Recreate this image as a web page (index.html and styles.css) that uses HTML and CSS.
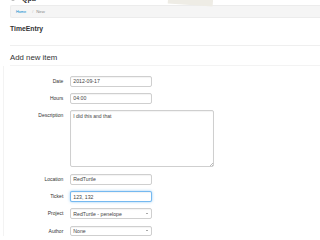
FILE: index.html
```html
<!DOCTYPE html>
<html lang="en">
  <head>
    <meta charset="UTF-8" />
    <meta name="viewport" content="width=device-width, initial-scale=1.0" />
    <title>TimeEntry - Add new item</title>
    <link rel="stylesheet" href="styles.css">
  </head>
  <body>
    <div class="paper"></div>
    <div class="topbar">
      <svg class="logo" width="6" height="6" viewBox="0 0 6 6">
        <circle cx="3" cy="3" r="2.3" fill="none" stroke="#9a9a9a" stroke-width="1" />
      </svg>
      <span class="brand">Qpa</span>
    </div>
    <div class="page">
      <ul class="breadcrumb">
        <li><a href="#">Home</a><span class="divider">/</span></li>
        <li class="active">New</li>
      </ul>
      <h1 class="title">TimeEntry</h1>
      <hr class="rule" />
      <form class="entry-form">
        <div class="legend">Add new item</div>
        <div class="rows">
          <div class="form-group">
            <label for="date">Date</label>
            <input type="text" id="date" value="2012-09-17" />
          </div>
          <div class="form-group">
            <label for="hours">Hours</label>
            <input type="text" id="hours" value="04:00" />
          </div>
          <div class="form-group top">
            <label for="description">Description</label>
            <span class="area">
              <textarea id="description">I did this and that</textarea>
            </span>
          </div>
          <div class="form-group">
            <label for="location">Location</label>
            <input type="text" id="location" value="RedTurtle" />
          </div>
          <div class="form-group">
            <label for="ticket">Ticket</label>
            <input type="text" id="ticket" class="focused" value="123, 132" />
          </div>
          <div class="form-group">
            <label for="project">Project</label>
            <span class="select">
              <select id="project">
                <option>RedTurtle - penelope</option>
              </select>
            </span>
          </div>
          <div class="form-group">
            <label for="author">Author</label>
            <span class="select">
              <select id="author">
                <option>None</option>
              </select>
            </span>
          </div>
        </div>
      </form>
    </div>
  </body>
</html>
```

FILE: styles.css
```css
body {
  margin: 0;
  padding: 0;
  background: #ffffff;
  font-family: "Liberation Sans", Arial, sans-serif;
  color: #333;
  overflow: hidden;
}

.paper {
  position: absolute;
  left: 168px;
  top: -5px;
  width: 45px;
  height: 10px;
  background: #eeece5;
  transform: rotate(4deg);
}

.topbar {
  display: flex;
  align-items: center;
  height: 12px;
  margin-top: -8px;
  margin-bottom: 1px;
  padding-left: 10px;
  position: relative;
}

.brand {
  margin-left: 6px;
  font-size: 7px;
  font-weight: bold;
  color: #333;
}

.page {
  padding-left: 10px;
}

.breadcrumb {
  list-style: none;
  display: flex;
  align-items: center;
  box-sizing: border-box;
  height: 13px;
  margin: 1px 0 0;
  padding: 0 0 0 5px;
  background: #f5f5f5;
  border: 1px solid #ececec;
  border-right: none;
  border-radius: 2px 0 0 2px;
  font-size: 3.8px;
}

.breadcrumb a {
  color: #0088cc;
  text-decoration: none;
}

.breadcrumb .divider {
  color: #bbb;
  padding: 0 3px 0 6px;
}

.breadcrumb .active {
  color: #888;
  font-size: 4.3px;
}

.title {
  margin: 7px 0 0;
  font-size: 6.8px;
  line-height: 8px;
  font-weight: bold;
  color: #333;
}

.rule {
  margin: 12px 0 0;
  border: none;
  border-top: 1px solid #efefef;
  height: 0;
}

.legend {
  margin-top: 7px;
  padding-bottom: 2px;
  font-size: 7.8px;
  line-height: 10px;
  color: #333;
  border-bottom: 1px solid #f3f3f3;
}

.entry-form {
  margin: 0;
}

.rows {
  margin-left: -7px;
  padding: 10px 0 0 7px;
  border-left: 1px solid #f3f3f3;
}

.form-group {
  display: flex;
  align-items: center;
  margin-bottom: 6.7px;
}

.form-group.top {
  align-items: flex-start;
}

.form-group label {
  width: 52.3px;
  margin-right: 7px;
  text-align: right;
  font-size: 5px;
  line-height: 10.5px;
  color: #333;
}

.form-group input,
.form-group textarea,
.form-group select {
  display: block;
  box-sizing: border-box;
  width: 82px;
  height: 10.5px;
  margin: 0;
  padding: 0 0 0 2px;
  border: 1px solid #cfcfcf;
  border-radius: 2px;
  background: #fff;
  box-shadow: inset 0 1px 1px rgba(0, 0, 0, 0.05);
  font-family: "Liberation Sans", Arial, sans-serif;
  font-size: 5.2px;
  line-height: 8px;
  color: #444;
  outline: none;
}

.area {
  position: relative;
  display: flex;
}

.form-group textarea {
  width: 144px;
  height: 57px;
  padding-top: 1.5px;
  line-height: 6px;
  font-size: 5px;
  resize: none;
}

.area::after {
  content: "";
  position: absolute;
  right: 1.5px;
  bottom: 1.5px;
  width: 3px;
  height: 3px;
  background: linear-gradient(135deg, transparent 45%, #bbb 45%, #bbb 55%, transparent 55%, transparent 75%, #bbb 75%, #bbb 85%, transparent 85%);
}

.form-group input.focused {
  border-color: rgba(82, 168, 236, 0.8);
  box-shadow: inset 0 1px 1px rgba(0, 0, 0, 0.05), 0 0 3px rgba(82, 168, 236, 0.6);
}

.select {
  position: relative;
  display: flex;
}

.form-group select {
  appearance: none;
  -webkit-appearance: none;
  padding-left: 2px;
}

.select::after {
  content: "";
  position: absolute;
  right: 4px;
  top: 4.5px;
  border-left: 1.3px solid transparent;
  border-right: 1.3px solid transparent;
  border-top: 1.6px solid #555;
}
```
